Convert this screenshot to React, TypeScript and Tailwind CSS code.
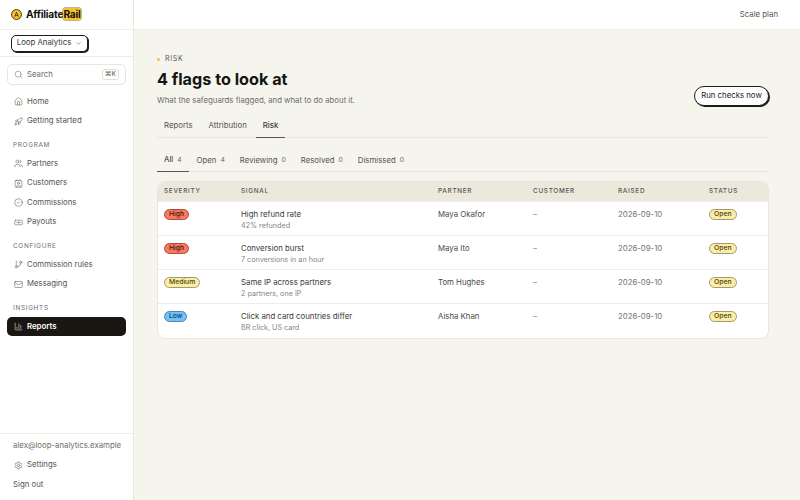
import { BarChart3, CircleCheck, GitBranch, Home, Mail, Rocket, Search, Settings, Users, ChevronDown, Contact, Banknote } from "lucide-react"

const groups = [
  { label: "PROGRAM", items: [
    { name: "Partners", icon: Users },
    { name: "Customers", icon: Contact },
    { name: "Commissions", icon: CircleCheck },
    { name: "Payouts", icon: Banknote },
  ] },
  { label: "CONFIGURE", items: [
    { name: "Commission rules", icon: GitBranch },
    { name: "Messaging", icon: Mail },
  ] },
]

const rows = [
  { severity: "High", signal: "High refund rate", detail: "42% refunded", partner: "Maya Okafor" },
  { severity: "High", signal: "Conversion burst", detail: "7 conversions in an hour", partner: "Maya Ito" },
  { severity: "Medium", signal: "Same IP across partners", detail: "2 partners, one IP", partner: "Tom Hughes" },
  { severity: "Low", signal: "Click and card countries differ", detail: "BR click, US card", partner: "Aisha Khan" },
]

function severityClass(severity: string) {
  if (severity === "High") return "bg-[#f9785f] text-[#4a1409] border-[#a8503f]"
  if (severity === "Medium") return "bg-[#fbeea6] text-[#4a3f0c] border-[#a39a68]"
  return "bg-[#72c0f8] text-[#0e3a5c] border-[#4f87b0]"
}

function NavItem({ name, icon: Icon }: { name: string; icon: any }) {
  return (
    <div className="flex items-center gap-[4px] h-[19.5px] px-[14px] text-[#55554f]">
      <Icon className="w-[9px] h-[9px] shrink-0" strokeWidth={1.4} />
      <span>{name}</span>
    </div>
  )
}

export default function App() {
  return (
    <div className="flex h-[500px] w-[800px] overflow-hidden bg-[#f5f4ed] text-[7.8px] font-['Inter',sans-serif] text-[#1c1c1a]">
      <aside className="flex w-[134px] shrink-0 flex-col border-r border-[#e9e6dc] bg-white">
        <div className="flex h-[30px] items-center gap-[4px] border-b border-[#efece4] pl-[11px]">
          <svg viewBox="0 0 12 12" className="w-[11px] h-[11px]">
            <circle cx="6" cy="6" r="5.4" fill="#f5c32c" stroke="#3a2c05" strokeWidth="1" />
            <path d="M4 8.5 6 3.5 8 8.5M4.8 7h2.4" fill="none" stroke="#3a2c05" strokeWidth="0.9" />
          </svg>
          <span className="text-[10.2px] font-bold tracking-[-0.2px] text-[#141412]">
            Affiliate<span className="rounded-[2px] bg-[#f5c32c] ring-[0.5px] ring-[#8a7020]">Rail</span>
          </span>
        </div>
        <div className="flex h-[27px] items-center border-b border-[#efece4] pl-[11px]">
          <button className="flex h-[17px] w-[77px] items-center justify-center gap-[4px] rounded-[5px] border border-[#1c1c1a] bg-white text-[#3a3a36] shadow-[1px_1px_0_#1c1c1a]">
            Loop Analytics
            <ChevronDown className="w-[7px] h-[7px]" strokeWidth={1.5} />
          </button>
        </div>
        <div className="mx-[7px] mt-[7px] flex h-[21px] items-center gap-[4px] rounded-[5px] border border-[#e9e6dc] px-[6px] text-[#6d6d68]">
          <Search className="w-[9px] h-[9px]" strokeWidth={1.4} />
          <span className="flex-1">Search</span>
          <span className="flex h-[11px] w-[17px] items-center justify-center rounded-[3px] border border-[#e2dfd5] text-[6.5px] font-medium">⌘K</span>
        </div>
        <nav className="mt-[7px]">
          <NavItem name="Home" icon={Home} />
          <NavItem name="Getting started" icon={Rocket} />
          {groups.map((group) => (
            <div key={group.label}>
              <div className="mt-[7px] flex h-[16px] items-center px-[13px] text-[6.4px] tracking-[0.7px] text-[#6d6d68]">{group.label}</div>
              {group.items.map((item) => <NavItem key={item.name} {...item} />)}
            </div>
          ))}
          <div className="mt-[7px] flex h-[16px] items-center px-[13px] text-[6.4px] tracking-[0.7px] text-[#6d6d68]">INSIGHTS</div>
          <div className="mx-[7px] flex h-[19px] items-center gap-[4px] rounded-[5px] bg-[#1a1712] px-[7px] font-semibold text-white">
            <BarChart3 className="w-[9px] h-[9px]" strokeWidth={1.4} />
            Reports
          </div>
        </nav>
        <div className="mt-auto border-t border-[#efece4] pt-[2px] pb-[5.5px]">
          <div className="flex h-[19.5px] items-center px-[13px] whitespace-nowrap text-[#6d6d68]">alex@loop-analytics.example</div>
          <NavItem name="Settings" icon={Settings} />
          <div className="flex h-[19.5px] items-center px-[13px] text-[#55554f]">Sign out</div>
        </div>
      </aside>

      <div className="flex min-w-0 flex-1 flex-col">
        <header className="flex h-[30px] shrink-0 items-center justify-end border-b border-[#efece4] bg-white pr-[22px] text-[#55554f]">
          Scale plan
        </header>
        <main className="pl-[23px] pr-[31px] pt-[24px]">
          <div className="flex items-end justify-between">
            <div>
              <div className="flex h-[10px] items-center gap-[5px] text-[7px] tracking-[0.7px] text-[#55554f]">
                <span className="h-[3px] w-[3px] rounded-full bg-[#f5c32c]" />
                RISK
              </div>
              <h1 className="mt-[2.5px] text-[16.2px] leading-[24px] font-bold text-[#141412]">4 flags to look at</h1>
              <p className="mt-[3px] leading-[12px] text-[#6d6d68]">What the safeguards flagged, and what to do about it.</p>
            </div>
            <button className="flex h-[20px] w-[75px] items-center justify-center rounded-full border border-[#1c1c1a] bg-white text-[#1c1c1a] shadow-[1px_1px_0_#1c1c1a]">
              Run checks now
            </button>
          </div>

          <div className="mt-[10px] flex h-[22px] border-b border-[#e9e6dc] text-[#55554f]">
            <span className="flex items-center px-[7px]">Reports</span>
            <span className="ml-[2px] flex items-center px-[7px]">Attribution</span>
            <span className="ml-[2px] -mb-px flex items-center border-b border-[#55554f] px-[7px] font-medium text-[#3a3a36]">Risk</span>
          </div>

          <div className="mt-[12px] flex h-[22px] gap-[1px] border-b border-[#e9e6dc] text-[#55554f]">
            {[["All", 4], ["Open", 4], ["Reviewing", 0], ["Resolved", 0], ["Dismissed", 0]].map(([label, count], i) => (
              <span key={label} className={`-mb-px flex items-center gap-[4px] px-[7px] ${i === 0 ? "border-b border-[#55554f] text-[#2a2a26]" : ""}`}>
                {label}
                <span className="text-[6.8px] text-[#6d6d68]">{count}</span>
              </span>
            ))}
          </div>

          <div className="mt-[9px] overflow-hidden rounded-[8px] border border-[#e9e6dc] bg-white">
            <table className="w-full table-fixed border-collapse text-left">
              <colgroup>
                <col className="w-[83px]" />
                <col className="w-[197px]" />
                <col className="w-[95px]" />
                <col className="w-[85px]" />
                <col className="w-[91px]" />
                <col />
              </colgroup>
              <thead>
                <tr className="h-[20px] bg-[#ebe8dc] text-[6.4px] tracking-[0.7px] text-[#55554f]">
                  {["SEVERITY", "SIGNAL", "PARTNER", "CUSTOMER", "RAISED", "STATUS"].map((h, i) => (
                    <th key={h} className={`pt-[1px] font-medium ${i === 0 ? "pl-[6px]" : ""}`}>{h}</th>
                  ))}
                </tr>
              </thead>
              <tbody>
                {rows.map((row) => (
                  <tr key={row.signal} className="h-[34px] border-t border-[#efece4] align-top text-[#4a4a46]">
                    <td className="pl-[6px] pt-[6px]">
                      <span className={`inline-flex h-[11px] items-center rounded-full border px-[4px] text-[6.8px] font-medium ${severityClass(row.severity)}`}>{row.severity}</span>
                    </td>
                    <td className="pt-[6.5px]">
                      <div className="leading-[11px] text-[#3a3a36]">{row.signal}</div>
                      <div className="text-[7.2px] leading-[11px] text-[#85857f]">{row.detail}</div>
                    </td>
                    <td className="pt-[6.5px] leading-[11px]">{row.partner}</td>
                    <td className="pt-[6.5px] leading-[11px] text-[#85857f]">–</td>
                    <td className="pt-[6.5px] leading-[11px] text-[#75756f]">2026-09-10</td>
                    <td className="pt-[6px]">
                      <span className="inline-flex h-[11px] items-center rounded-full border border-[#a39a68] bg-[#fbeea6] px-[4px] text-[6.8px] font-medium text-[#4a3f0c]">Open</span>
                    </td>
                  </tr>
                ))}
              </tbody>
            </table>
          </div>
        </main>
      </div>
    </div>
  )
}
